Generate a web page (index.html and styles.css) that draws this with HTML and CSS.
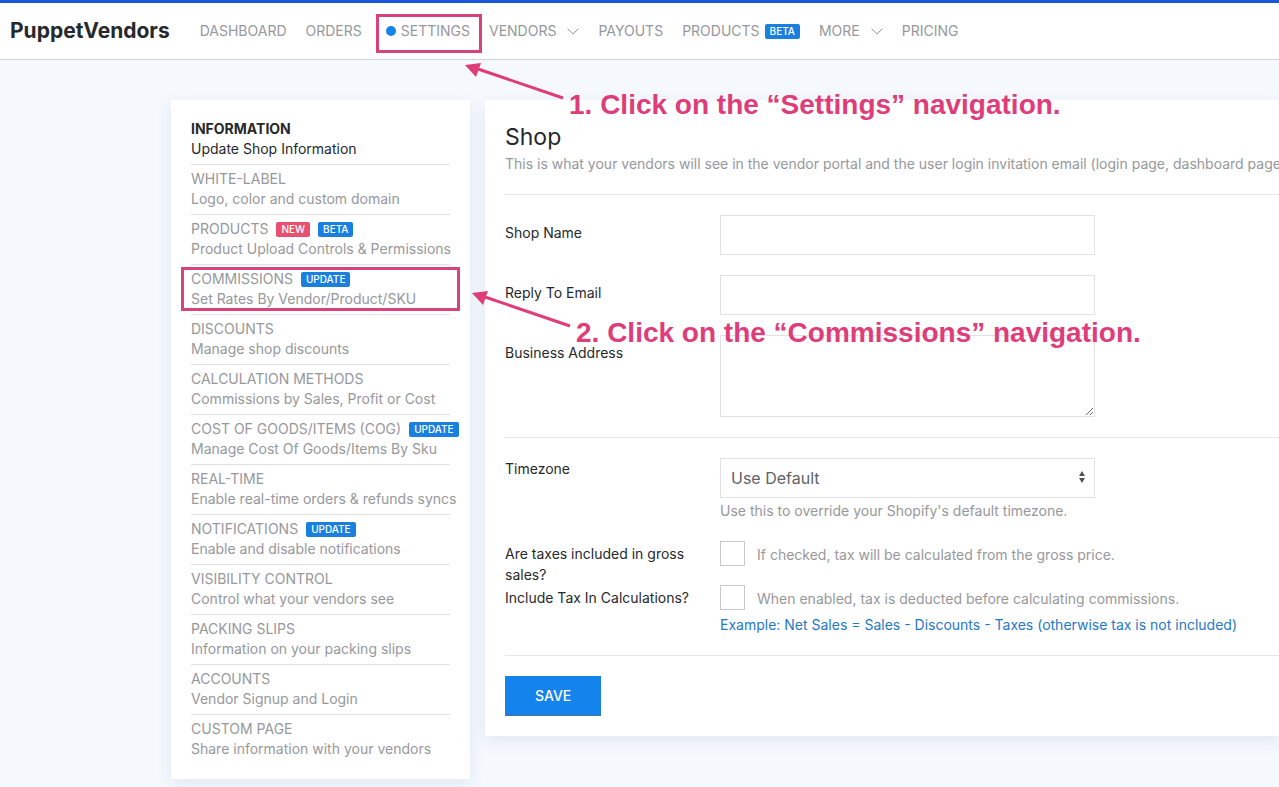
FILE: index.html
```
<!DOCTYPE html>
<html lang="en">
<head>
    <meta charset="UTF-8">
    <meta name="viewport" content="width=device-width, initial-scale=1.0">
    <title>PuppetVendors - Settings</title>
    <link rel="stylesheet" href="styles.css">
</head>
<body>

    <!-- Top navigation -->
    <header class="topbar">
        <a class="logo" href="#">PuppetVendors</a>
        <nav class="main-nav">
            <a href="#">DASHBOARD</a>
            <a href="#">ORDERS</a>
            <a href="#" class="current"><span class="dot"></span>SETTINGS</a>
            <a href="#">VENDORS
                <svg class="chevron" viewBox="0 0 12 7"><path d="M0.5 0.5 L6 6 L11.5 0.5"/></svg>
            </a>
            <a href="#">PAYOUTS</a>
            <a href="#">PRODUCTS <span class="badge">BETA</span></a>
            <a href="#">MORE
                <svg class="chevron" viewBox="0 0 12 7"><path d="M0.5 0.5 L6 6 L11.5 0.5"/></svg>
            </a>
            <a href="#">PRICING</a>
        </nav>
    </header>

    <div class="content">

        <!-- Settings sections -->
        <aside class="card sidebar">
            <ul>
                <li class="active"><a href="#"><span class="title">INFORMATION</span><span>Update Shop Information</span></a></li>
                <li><a href="#"><span class="title">WHITE-LABEL</span><span>Logo, color and custom domain</span></a></li>
                <li><a href="#"><span class="title">PRODUCTS <b class="badge badge-new">NEW</b> <b class="badge">BETA</b></span><span>Product Upload Controls &amp; Permissions</span></a></li>
                <li class="marked"><a href="#"><span class="title">COMMISSIONS <b class="badge">UPDATE</b></span><span>Set Rates By Vendor/Product/SKU</span></a></li>
                <li><a href="#"><span class="title">DISCOUNTS</span><span>Manage shop discounts</span></a></li>
                <li><a href="#"><span class="title">CALCULATION METHODS</span><span>Commissions by Sales, Profit or Cost</span></a></li>
                <li><a href="#"><span class="title">COST OF GOODS/ITEMS (COG) <b class="badge">UPDATE</b></span><span>Manage Cost Of Goods/Items By Sku</span></a></li>
                <li><a href="#"><span class="title">REAL-TIME</span><span>Enable real-time orders &amp; refunds syncs</span></a></li>
                <li><a href="#"><span class="title">NOTIFICATIONS <b class="badge">UPDATE</b></span><span>Enable and disable notifications</span></a></li>
                <li><a href="#"><span class="title">VISIBILITY CONTROL</span><span>Control what your vendors see</span></a></li>
                <li><a href="#"><span class="title">PACKING SLIPS</span><span>Information on your packing slips</span></a></li>
                <li><a href="#"><span class="title">ACCOUNTS</span><span>Vendor Signup and Login</span></a></li>
                <li><a href="#"><span class="title">CUSTOM PAGE</span><span>Share information with your vendors</span></a></li>
            </ul>
        </aside>

        <!-- Shop form -->
        <main class="card shop">
            <h1>Shop</h1>
            <p class="intro">This is what your vendors will see in the vendor portal and the user login invitation email (login page, dashboard page, etc.)</p>
            <hr>
            <form>
                <div class="row">
                    <label class="tall" for="shop-name">Shop Name</label>
                    <input type="text" id="shop-name" class="field">
                </div>
                <div class="row">
                    <label class="tall" for="reply-email">Reply To Email</label>
                    <input type="email" id="reply-email" class="field">
                </div>
                <div class="row">
                    <label class="tall" for="address">Business Address</label>
                    <textarea id="address" class="field"></textarea>
                </div>
                <hr>
                <div class="row">
                    <label for="timezone">Timezone</label>
                    <div class="control">
                        <div class="select-wrap">
                            <select id="timezone" class="field">
                                <option>Use Default</option>
                            </select>
                            <svg class="updown" viewBox="0 0 6 12"><path d="M3 0 L6 5 H0 Z M0 7 H6 L3 12 Z"/></svg>
                        </div>
                        <p class="help">Use this to override your Shopify's default timezone.</p>
                    </div>
                </div>
                <div class="row row-check">
                    <label for="tax-included">Are taxes included in gross sales?</label>
                    <div class="check">
                        <input type="checkbox" id="tax-included">
                        <span>If checked, tax will be calculated from the gross price.</span>
                    </div>
                </div>
                <div class="row row-check">
                    <label for="include-tax">Include Tax In Calculations?</label>
                    <div class="control">
                        <div class="check">
                            <input type="checkbox" id="include-tax">
                            <span>When enabled, tax is deducted before calculating commissions.</span>
                        </div>
                        <p class="example">Example: Net Sales = Sales - Discounts - Taxes (otherwise tax is not included)</p>
                    </div>
                </div>
                <hr>
                <button type="button" class="save">SAVE</button>
            </form>
        </main>
    </div>

    <!-- Walkthrough notes over the page -->
    <div class="note note-settings">
        <svg class="arrow" viewBox="0 0 102 38"><path class="shaft" d="M99 35 L14 6"/><path d="M1 2 L17 0 L12 14 Z"/></svg>
        <p>1. Click on the “Settings” navigation.</p>
    </div>
    <div class="note note-commissions">
        <svg class="arrow" viewBox="0 0 102 38"><path class="shaft" d="M99 35 L14 6"/><path d="M1 2 L17 0 L12 14 Z"/></svg>
        <p>2. Click on the “Commissions” navigation.</p>
    </div>

</body>
</html>
```
FILE: styles.css
```
* {
    box-sizing: border-box;
}

body {
    margin: 0;
    position: relative;
    overflow-x: hidden;
    font-family: Inter, Roboto, sans-serif;
    font-size: 14px;
    line-height: 20px;
    color: #26292c;
    background-color: #f5f9fe;
}

a { color: inherit; text-decoration: none; }
p { margin: 0; }

/* Top navigation */
.topbar {
    display: flex;
    align-items: center;
    gap: 30px;
    height: 60px;
    padding: 0 10px;
    border-top: 3px solid #1a56db;
    border-bottom: 1px solid #cbd3e1;
    background-color: #fff;
}
.logo {
    font-size: 21px;
    font-weight: 700;
}
.main-nav {
    display: flex;
    gap: 19px;
    color: #96989b;
    white-space: nowrap;
}
.main-nav a {
    display: flex;
    align-items: center;
    gap: 5px;
}
.main-nav .current {
    position: relative;
    padding-left: 5px;
}
.main-nav .current::after {
    content: "";
    position: absolute;
    inset: -7px -12px -12px -5px;
    border: 3px solid #d8437c;
}
.dot {
    width: 10px;
    height: 10px;
    border-radius: 50%;
    background-color: #1583ec;
}
.chevron {
    width: 12px;
    height: 7px;
    margin-left: 6px;
    fill: none;
    stroke: #96989b;
}

.badge {
    display: inline-block;
    padding: 0 5px;
    border-radius: 2px;
    font-size: 10px;
    font-weight: 500;
    line-height: 15px;
    color: #fff;
    background-color: #1a80e0;
}
.badge-new { background-color: #e94f70; }

/* Page body */
.content {
    display: flex;
    align-items: flex-start;
    gap: 15px;
    padding: 40px 0 8px 171px;
}
.card {
    padding: 20px;
    background-color: #fff;
    box-shadow: 0 5px 15px rgba(30, 50, 120, 0.09);
}

/* Sidebar */
.sidebar {
    flex: 0 0 299px;
    min-width: 0;
    padding-top: 15px;
    color: #96989b;
}
.sidebar ul {
    margin: 0;
    padding: 0;
    list-style: none;
}
.sidebar li {
    position: relative;
    padding: 4px 0 5px;
    border-bottom: 1px solid #e0e2e5;
    white-space: nowrap;
}
.sidebar li:last-child {
    padding-bottom: 0;
    border-bottom: 0;
}
.sidebar li span { display: block; }
.sidebar .title {
    display: flex;
    align-items: center;
    gap: 8px;
}
.sidebar .active { color: #26292c; }
.sidebar .active .title { font-weight: 700; }
.sidebar .marked::after {
    content: "";
    position: absolute;
    inset: 2px -10px 3px;
    border: 3px solid #d8437c;
}

/* Shop form */
.shop {
    flex: 1;
    min-width: 0;
    padding-right: 0;
}
.shop h1 {
    margin: 0;
    font-size: 23px;
    font-weight: 400;
    line-height: 34px;
}
.intro {
    overflow: hidden;
    white-space: nowrap;
    color: #96989b;
}
hr {
    margin: 20px 0;
    border: 0;
    border-top: 1px solid #e3e5e7;
}
.row {
    display: flex;
    gap: 15px;
    margin-bottom: 20px;
}
.row > label {
    flex: 0 0 200px;
    line-height: 21px;
}
.row > .tall { padding-top: 7px; }
.row-check { margin-bottom: 0; }
.row-check > label { padding-top: 2px; }
.field {
    display: block;
    width: 375px;
    height: 40px;
    padding: 0 10px;
    border: 1px solid #dfe1e4;
    border-radius: 0;
    font: inherit;
    font-size: 16px;
    color: #5f6266;
    background-color: #fff;
}
textarea.field { height: 82px; }
select.field { appearance: none; }
.select-wrap {
    position: relative;
    width: 375px;
}
.updown {
    position: absolute;
    right: 10px;
    top: 13px;
    width: 6px;
    height: 12px;
    fill: #505357;
}
.help {
    margin-top: 3px;
    color: #96989b;
}
.check {
    display: flex;
    align-items: flex-start;
    gap: 12px;
    color: #96989b;
}
.check span { padding-top: 4px; }
.check input {
    appearance: none;
    width: 25px;
    height: 25px;
    margin: 0;
    border: 1px solid #c6c8cb;
    background-color: #fff;
}
.example {
    margin-top: 5px;
    color: #1f78c8;
}
.save {
    display: block;
    height: 40px;
    padding: 0 30px;
    border: 0;
    border-bottom: 1px solid #4d7396;
    font: inherit;
    font-weight: 500;
    color: #fff;
    background-color: #1583ec;
}

/* Walkthrough notes */
.note {
    position: absolute;
    display: flex;
    gap: 3px;
    font-family: "Liberation Sans", Arial, sans-serif;
    font-size: 28px;
    font-weight: 700;
    line-height: 32px;
    white-space: nowrap;
    color: #df3d7a;
}
.note p { padding-top: 26px; }
.note-settings { left: 464px; top: 63px; }
.note-commissions { left: 471px; top: 291px; }
.arrow {
    width: 102px;
    height: 38px;
    fill: #df3d7a;
}
.shaft {
    stroke: #df3d7a;
    stroke-width: 3;
}
```
